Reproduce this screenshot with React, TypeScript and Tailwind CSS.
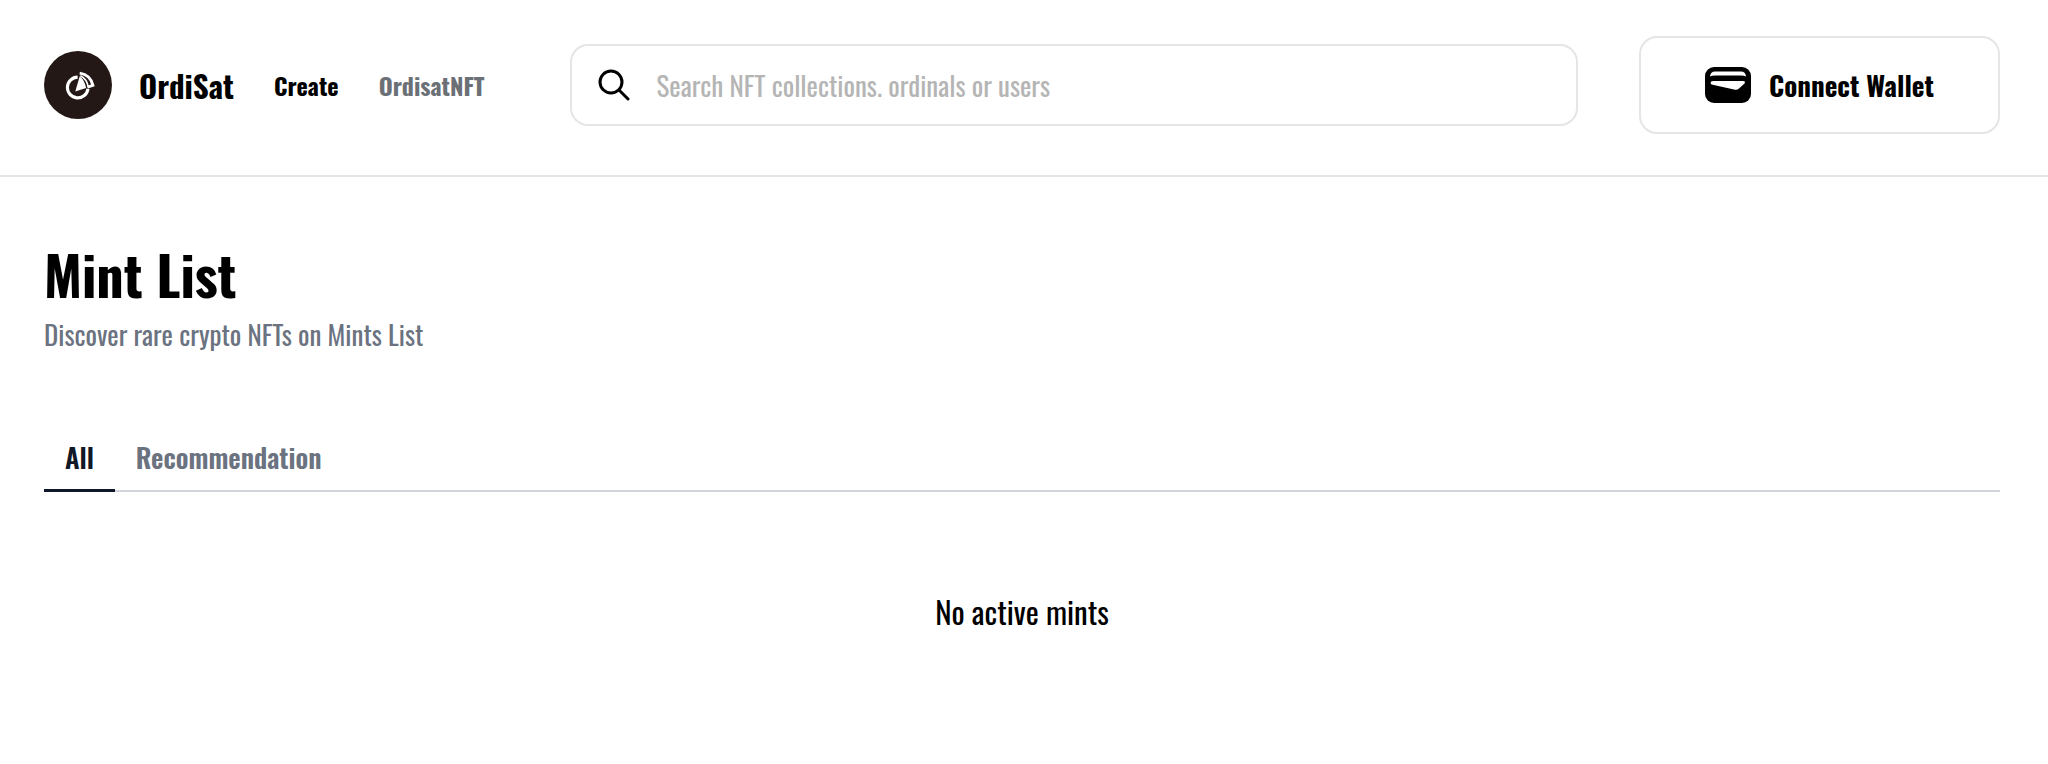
import { useState } from 'react'

const tabs = ['All', 'Recommendation']

function Logo() {
  return (
    <svg viewBox="0 0 100 100" className="size-17 shrink-0" aria-hidden="true">
      <circle cx="50" cy="50" r="50" fill="#231815" />
      <path d="M49.500 38.500A15.200 15.200 0 1 0 64.700 55.500" fill="none" stroke="#fff" strokeWidth="4.600" />
      <path d="M52.500 37Q60 43 62 54.500L46 59.500Z" fill="#fff" />
      <path d="M53.500 36.500Q63 41 65 53" fill="none" stroke="#fff" strokeWidth="2.500" />
      <path d="M52.500 32.500Q68.500 35 72 50.500L64 53" fill="none" stroke="#fff" strokeWidth="4.200" />
    </svg>
  )
}

function SearchIcon() {
  return (
    <svg viewBox="0 0 32 32" className="size-8 shrink-0" fill="none" stroke="#000" strokeWidth="3" strokeLinecap="round" aria-hidden="true">
      <circle cx="13" cy="13" r="11" />
      <path d="M21 21L30 30" />
    </svg>
  )
}

function WalletIcon() {
  return (
    <svg viewBox="0 0 46 36" className="h-9 w-11.5 shrink-0" aria-hidden="true">
      <rect width="46" height="36" rx="9" fill="#000" />
      <path d="M5 9.500Q5.500 4.500 10 4.500H36Q40.500 4.500 41 9.500Q39 8.500 36 8.500H10Q7 8.500 5 9.500Z" fill="#fff" />
      <path d="M5.500 16Q5.500 14 8 14H38Q41 14 39.500 16.500L34 21.500Q32 23.500 29 22.500L6.500 17.500Z" fill="#fff" />
    </svg>
  )
}

function Header() {
  return (
    <header className="flex items-center border-b-2 border-[#e5e5e5] pt-9 pr-12 pb-[41px] pl-11">
      <a href="#" className="flex items-center gap-[27px]">
        <Logo />
        <span className="text-[31px] leading-10 font-bold">OrdiSat</span>
      </a>
      <nav className="ml-10 flex items-center gap-10 text-[24px] leading-10 font-bold">
        <a href="#create">Create</a>
        <a href="#nft" className="text-[#6b7076]">OrdisatNFT</a>
      </nav>
      <label className="ml-[85px] flex h-[82px] flex-1 items-center gap-[27px] rounded-[18px] border-2 border-[#e5e5e5] px-[26px]">
        <SearchIcon />
        <input
          type="text"
          aria-label="Search"
          placeholder="Search NFT collections. ordinals or users"
          className="w-full bg-transparent text-[27px] leading-10 outline-none placeholder:text-[#b5b5b5]"
        />
      </label>
      <button type="button" className="ml-[61px] flex h-[98px] w-[361px] items-center justify-center gap-[18px] rounded-[18px] border-2 border-[#e5e5e5] text-[27px] leading-10 font-bold">
        <WalletIcon />
        Connect Wallet
      </button>
    </header>
  )
}

export default function App() {
  const [active, setActive] = useState('All')

  return (
    <div className="min-h-screen bg-white font-['Oswald','Liberation_Sans_Narrow','Arial_Narrow',sans-serif] text-black">
      <Header />
      <main className="pt-[61px] pr-12 pl-11">
        <h1 className="text-[54px] leading-18 font-bold">Mint List</h1>
        <p className="mt-1 text-[27px] leading-10 text-[#6b7280]">Discover rare crypto NFTs on Mints List</p>
        <div role="tablist" className="mt-18 flex border-b-2 border-[#d1d5db] text-[27px] leading-10 font-semibold">
          {tabs.map((tab) => (
            <button
              key={tab}
              type="button"
              role="tab"
              aria-selected={active === tab}
              onClick={() => setActive(tab)}
              className={`-mb-0.5 border-b-3 px-[21px] pt-[11px] pb-3 ${
                active === tab ? 'border-[#0f172a] text-[#111827]' : 'border-transparent text-[#6b7280]'
              }`}
            >
              {tab}
            </button>
          ))}
        </div>
        <p className="mt-[99px] text-center text-[31px] leading-10">No active mints</p>
      </main>
    </div>
  )
}
